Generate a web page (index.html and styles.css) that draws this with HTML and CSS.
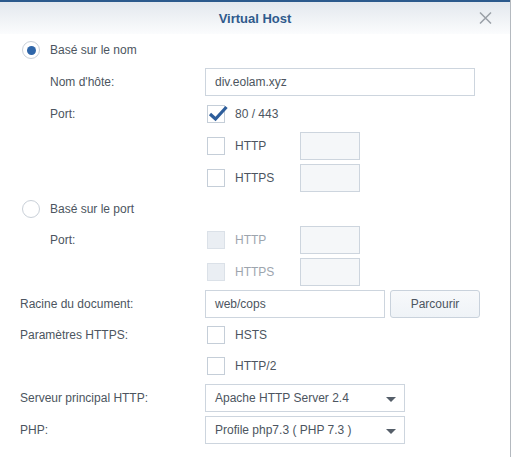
FILE: index.html
```html
<!DOCTYPE html>
<html>
<head>
<meta charset="utf-8">
<link rel="stylesheet" href="styles.css">
</head>
<body>
<div class="dialog">
  <div class="header">
    <div class="title">Virtual Host</div>
    <svg class="close" width="13" height="12" viewBox="0 0 13 12"><path d="M1 0.5 L12 11.5 M12 0.5 L1 11.5" stroke="#9aa0a7" stroke-width="1.5" fill="none"/></svg>
  </div>
  <div class="content">
    <div class="row">
      <span class="radio on"><span class="dot"></span></span>
      <span class="radio-label">Basé sur le nom</span>
    </div>
    <div class="row">
      <span class="label indent">Nom d'hôte:</span>
      <div class="input wide">div.eolam.xyz</div>
    </div>
    <div class="row">
      <span class="label indent">Port:</span>
      <span class="check checked"><svg class="tick" width="21" height="19" viewBox="0 0 21 19"><path d="M3 10 L8.5 15 L19.5 3" stroke="#2e5e9b" stroke-width="3.2" fill="none" stroke-linejoin="miter"/></svg></span>
      <span class="check-label">80 / 443</span>
    </div>
    <div class="row">
      <span class="label"></span>
      <span class="check"></span>
      <span class="check-label short">HTTP</span>
      <div class="input port"></div>
    </div>
    <div class="row">
      <span class="label"></span>
      <span class="check"></span>
      <span class="check-label short">HTTPS</span>
      <div class="input port"></div>
    </div>
    <div class="row short-row">
      <span class="radio"></span>
      <span class="radio-label">Basé sur le port</span>
    </div>
    <div class="row">
      <span class="label indent">Port:</span>
      <span class="check disabled"></span>
      <span class="check-label short disabled-text">HTTP</span>
      <div class="input port"></div>
    </div>
    <div class="row">
      <span class="label"></span>
      <span class="check disabled"></span>
      <span class="check-label short disabled-text">HTTPS</span>
      <div class="input port"></div>
    </div>
    <div class="row">
      <span class="label">Racine du document:</span>
      <div class="input mid">web/cops</div>
      <div class="button">Parcourir</div>
    </div>
    <div class="row short-row">
      <span class="label">Paramètres HTTPS:</span>
      <span class="check"></span>
      <span class="check-label">HSTS</span>
    </div>
    <div class="row">
      <span class="label"></span>
      <span class="check"></span>
      <span class="check-label">HTTP/2</span>
    </div>
    <div class="row">
      <span class="label">Serveur principal HTTP:</span>
      <div class="input select">Apache HTTP Server 2.4<span class="arrow"></span></div>
    </div>
    <div class="row">
      <span class="label">PHP:</span>
      <div class="input select">Profile php7.3 ( PHP 7.3 )<span class="arrow"></span></div>
    </div>
  </div>
</div>
</body>
</html>
```

FILE: styles.css
```css
html, body {
  margin: 0;
  padding: 0;
  background: #ffffff;
}
body {
  font-family: "Liberation Sans", Arial, sans-serif;
  font-size: 12px;
  color: #4c5560;
}
.dialog {
  width: 510px;
  height: 457px;
  border-right: 1px solid #b4b9bf;
  box-sizing: content-box;
}
.header {
  position: relative;
  height: 32px;
  border-top: 2px solid #2c5a8d;
  background: linear-gradient(#e3e8ee, #fbfcfd);
  display: flex;
  align-items: center;
  justify-content: center;
}
.title {
  font-size: 13px;
  font-weight: bold;
  color: #2f5a8c;
}
.close {
  position: absolute;
  right: 18px;
  top: 10px;
}
.content {
  padding: 2px 0 0 20px;
  display: flex;
  flex-direction: column;
  gap: 4px;
}
.row {
  display: flex;
  align-items: center;
  height: 28px;
}
.row.short-row {
  height: 26px;
}
.label {
  flex: 0 0 185px;
  box-sizing: border-box;
}
.label.indent {
  padding-left: 30px;
}
.radio {
  width: 16px;
  height: 16px;
  border: 1px solid #c9d0d8;
  border-radius: 50%;
  margin-left: 2px;
  margin-right: 10px;
  display: flex;
  align-items: center;
  justify-content: center;
  background: #fff;
}
.radio .dot {
  width: 9px;
  height: 9px;
  border-radius: 50%;
  background: #2f66a9;
}
.check {
  position: relative;
  width: 16px;
  height: 16px;
  border: 1px solid #c5ced8;
  margin-left: 2px;
  background: #fff;
  flex: 0 0 auto;
}
.check.disabled {
  background: #eaeef3;
  border-color: #dbe1e8;
}
.tick {
  position: absolute;
  left: -1px;
  top: -2px;
}
.check-label {
  margin-left: 10px;
}
.check-label.short {
  flex: 0 0 65px;
}
.disabled-text {
  color: #9da5ae;
}
.input {
  box-sizing: border-box;
  height: 28px;
  border: 1px solid #cdd5de;
  background: #fff;
  padding: 0 9px;
  display: flex;
  align-items: center;
  color: #4c5560;
}
.input.wide {
  width: 270px;
}
.input.mid {
  width: 180px;
}
.input.port {
  width: 60px;
  background: #f5f7f9;
}
.input.select {
  width: 200px;
  position: relative;
}
.arrow {
  position: absolute;
  right: 8px;
  top: 12px;
  width: 0;
  height: 0;
  border-left: 5px solid transparent;
  border-right: 5px solid transparent;
  border-top: 5px solid #555e69;
}
.button {
  box-sizing: border-box;
  margin-left: 5px;
  width: 90px;
  height: 28px;
  border: 1px solid #c9d2dc;
  border-radius: 3px;
  background: linear-gradient(#f7f9fb, #eff3f7);
  display: flex;
  align-items: center;
  justify-content: center;
  color: #4c5560;
}
```
